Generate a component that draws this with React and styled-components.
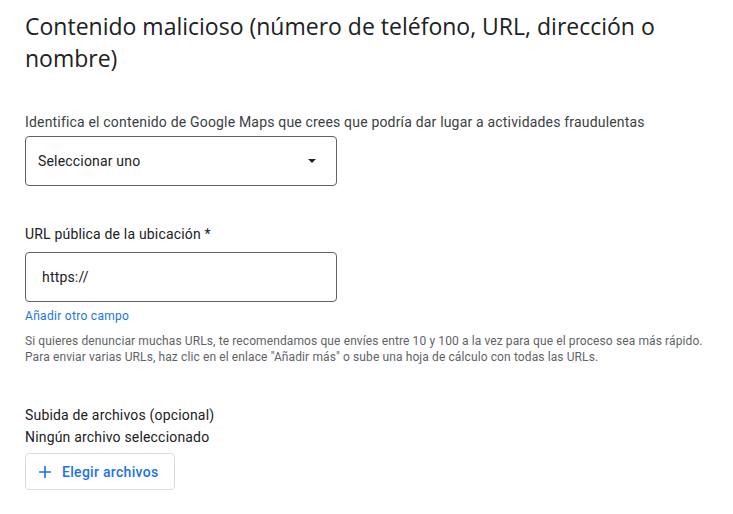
import React from "react";
import styled, { createGlobalStyle } from "styled-components";

const Global = createGlobalStyle`
  html, body { margin: 0; padding: 0; background: #fff; }
  body { font-family: Roboto, "Liberation Sans", Arial, sans-serif; color: #202124; }
`;

const Page = styled.div`
  padding: 10px 25px 0 25px;
  display: flex;
  flex-direction: column;
`;

const Title = styled.h1`
  margin: 0;
  font-family: "Open Sans", Roboto, sans-serif;
  font-weight: 400;
  font-size: 23px;
  line-height: 32px;
  color: #202124;
  max-width: 670px;
`;

const Field = styled.div`
  display: flex;
  flex-direction: column;
  margin-top: ${(p) => p.$mt || 0}px;
`;

const Label = styled.div`
  font-size: 14px;
  line-height: 20px;
  letter-spacing: 0.18px;
  margin-top: ${(p) => p.$mt || 0}px;
  color: ${(p) => (p.$muted ? "#3c4043" : "#202124")};
`;

const Box = styled.div`
  box-sizing: border-box;
  width: 312px;
  height: 50px;
  border: 1px solid #5f6368;
  border-radius: 4px;
  display: flex;
  align-items: center;
  justify-content: space-between;
  padding: 0 ${(p) => p.$pr || 20}px 0 ${(p) => p.$pl || 12}px;
  margin-top: ${(p) => p.$mt || 0}px;
  font-size: 14px;
  letter-spacing: 0.18px;
  color: #202124;
`;

const Caret = styled.span`
  width: 0;
  height: 0;
  border-left: 4px solid transparent;
  border-right: 4px solid transparent;
  border-top: 4px solid #202124;
`;

const Link = styled.a`
  font-size: 12px;
  line-height: 16px;
  letter-spacing: 0.3px;
  color: #1a73e8;
  text-decoration: none;
  margin-top: 6px;
  cursor: pointer;
`;

const Help = styled.p`
  margin: 9px 0 0 0;
  font-size: 12px;
  line-height: 16px;
  letter-spacing: 0.11px;
  color: #5f6368;
`;

const Button = styled.button`
  box-sizing: border-box;
  margin-top: 6px;
  align-self: flex-start;
  width: 150px;
  height: 37px;
  border: 1px solid #dadce0;
  border-radius: 4px;
  background: #fff;
  display: flex;
  align-items: center;
  gap: 10px;
  padding: 0 12px;
  font-family: Roboto, sans-serif;
  font-size: 14px;
  font-weight: 500;
  letter-spacing: 0.3px;
  color: #1a73e8;
  cursor: pointer;
`;

export default function App() {
  return (
    <>
      <Global />
      <Page>
        <Title>Contenido malicioso (número de teléfono, URL, dirección o nombre)</Title>
        <Field $mt={38}>
          <Label $muted>Identifica el contenido de Google Maps que crees que podría dar lugar a actividades fraudulentas</Label>
          <Box $mt={4}>
            <span>Seleccionar uno</span>
            <Caret />
          </Box>
        </Field>
        <Field $mt={38}>
          <Label>URL pública de la ubicación *</Label>
          <Box $mt={8} $pl={16}>
            <span>https://</span>
          </Box>
          <Link>Añadir otro campo</Link>
          <Help>
            Si quieres denunciar muchas URLs, te recomendamos que envíes entre 10 y 100 a la vez para que el proceso sea más rápido.
            <br />
            Para enviar varias URLs, haz clic en el enlace "Añadir más" o sube una hoja de cálculo con todas las URLs.
          </Help>
        </Field>
        <Field $mt={40}>
          <Label>Subida de archivos (opcional)</Label>
          <Label $mt={2}>Ningún archivo seleccionado</Label>
          <Button>
            <svg width="14" height="14" viewBox="0 0 14 14">
              <path d="M7 1v12M1 7h12" stroke="#1a73e8" strokeWidth="1.6" />
            </svg>
            Elegir archivos
          </Button>
        </Field>
      </Page>
    </>
  );
}
